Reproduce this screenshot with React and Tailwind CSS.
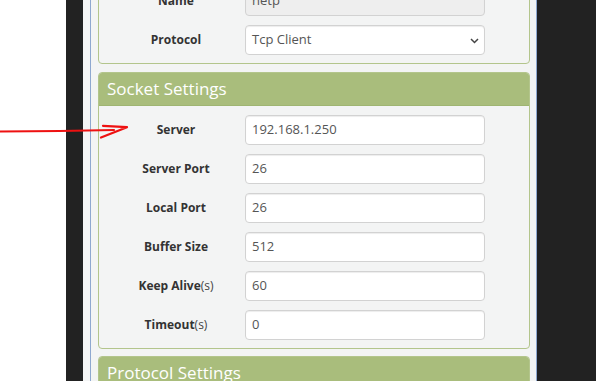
import React from "react";

const font = { fontFamily: '"Open Sans", "Liberation Sans", sans-serif' };

function Row({ label, suffix, value, disabled, select }) {
  return (
    <div className="flex items-center h-[30px]">
      <div className="w-[138px] ml-[8px] text-center text-[12px] font-bold text-[#333]">
        {label}
        {suffix && <span className="font-normal text-[#444]">{suffix}</span>}
      </div>
      <div
        className={
          "relative w-[240px] h-[30px] rounded-[4px] border border-[#d2d2d2] shadow-[inset_0_1px_1px_rgba(0,0,0,0.075)] flex items-center pl-[6px] text-[13px] text-[#555] " +
          (disabled ? "bg-[#eeeeee]" : "bg-white")
        }
      >
        {value}
        {select && (
          <svg
            className="absolute right-[5px] top-[12px]"
            width="9"
            height="6"
            viewBox="0 0 9 6"
          >
            <path d="M1 1 L4.5 4.5 L8 1" fill="none" stroke="#444" strokeWidth="1.5" />
          </svg>
        )}
      </div>
    </div>
  );
}

function Panel({ title, children, className = "" }) {
  return (
    <div className={"rounded-[4px] border border-[#b3c58c] bg-[#f3f4f4] overflow-hidden " + className}>
      {title && (
        <div className="h-[33px] bg-[#a9bd7c] border-b border-[#9fb572] flex items-center pl-[8px] text-[17px] text-white">
          {title}
        </div>
      )}
      {children && (
        <div className="flex flex-col gap-[9px] pt-[9px] pb-[8px]">{children}</div>
      )}
    </div>
  );
}

export default function App() {
  return (
    <div className="relative w-[596px] h-[381px] overflow-hidden flex bg-white" style={font}>
      <div className="w-[66px] shrink-0 bg-white" />
      <div className="w-[17px] shrink-0 bg-[#222222]" />
      <div className="w-[7px] shrink-0 bg-[#f4f5f5]" />
      <div className="w-[447px] shrink-0 bg-[#f3f4f4] border-l border-r border-[#8ea8d0] pl-[7px] pr-[6px]">
        <div className="-mt-[24px] flex flex-col">
          <Panel>
            <Row label="Name" value="netp" disabled />
            <Row label="Protocol" value="Tcp Client" select />
          </Panel>
          <Panel title="Socket Settings" className="mt-[8px]">
            <Row label="Server" value="192.168.1.250" />
            <Row label="Server Port" value="26" />
            <Row label="Local Port" value="26" />
            <Row label="Buffer Size" value="512" />
            <Row label="Keep Alive" suffix="(s)" value="60" />
            <Row label="Timeout" suffix="(s)" value="0" />
          </Panel>
          <Panel title="Protocol Settings" className="mt-[7px] h-[60px]" />
        </div>
      </div>
      <div className="flex-1 bg-[#222222]" />
      <svg
        className="absolute left-0 top-0 pointer-events-none"
        width="596"
        height="381"
        viewBox="0 0 596 381"
      >
        <g fill="none" stroke="#ee1111" strokeWidth="2.2" strokeLinecap="round" strokeLinejoin="round">
          <path d="M0 131.5 L60 131 L114 130" />
          <path d="M103 125.8 L127 127.2 L101 137.5" />
        </g>
      </svg>
    </div>
  );
}
